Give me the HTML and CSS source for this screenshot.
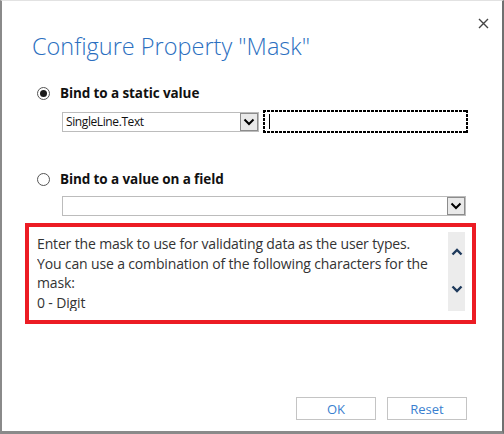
FILE: index.html
```html
<!DOCTYPE html>
<html>
<head>
<meta charset="utf-8">
<link rel="stylesheet" href="styles.css">
</head>
<body>
<div class="dialog">
  <div class="close-row">
    <svg class="close" width="11" height="11" viewBox="0 0 11 11"><path d="M1 1 L10 10 M10 1 L1 10" stroke="#444" stroke-width="1.4" fill="none"/></svg>
  </div>
  <h1 class="title">Configure Property "Mask"</h1>

  <div class="option first">
    <span class="radio checked"></span>
    <span class="opt-label">Bind to a static value</span>
  </div>
  <div class="controls">
    <div class="select short">
      <span class="select-text">SingleLine.Text</span>
      <span class="select-btn"><svg width="12" height="8" viewBox="0 0 12 8"><path d="M1.5 1.5 L6 6 L10.5 1.5" stroke="#000" stroke-width="2" fill="none"/></svg></span>
    </div>
    <div class="textbox"><span class="caret"></span></div>
  </div>

  <div class="option second">
    <span class="radio"></span>
    <span class="opt-label">Bind to a value on a field</span>
  </div>
  <div class="controls">
    <div class="select long">
      <span class="select-text"></span>
      <span class="select-btn"><svg width="12" height="8" viewBox="0 0 12 8"><path d="M1.5 1.5 L6 6 L10.5 1.5" stroke="#000" stroke-width="2" fill="none"/></svg></span>
    </div>
  </div>

  <div class="desc">
    <div class="desc-text">Enter the mask to use for validating data as the user types.<br>You can use a combination of the following characters for the<br>mask:<br>0 - Digit</div>
    <div class="scroller">
      <svg width="12" height="8" viewBox="0 0 12 8"><path d="M1.5 6.5 L6 2 L10.5 6.5" stroke="#1e3a5c" stroke-width="2.4" fill="none"/></svg>
      <svg width="12" height="8" viewBox="0 0 12 8"><path d="M1.5 1.5 L6 6 L10.5 1.5" stroke="#1e3a5c" stroke-width="2.4" fill="none"/></svg>
    </div>
  </div>

  <div class="footer">
    <button class="btn">OK</button>
    <button class="btn">Reset</button>
  </div>
</div>
</body>
</html>
```
FILE: styles.css
```css
html, body {
  margin: 0;
  padding: 0;
  background: #fff;
}
.dialog {
  box-sizing: border-box;
  width: 504px;
  height: 434px;
  border-top: 1px solid #e2e2e2;
  border-left: 2px solid #8a8a8a;
  border-right: 2px solid #707070;
  border-bottom: 3px solid #8a8a8a;
  display: flex;
  flex-direction: column;
  font-family: "Open Sans", "Noto Sans", sans-serif;
  color: #333;
}
.close-row {
  display: flex;
  justify-content: flex-end;
  padding: 17px 13px 0 0;
  height: 11px;
}
.close { display: block; }
.title {
  margin: 1px 0 0 30px;
  font-size: 23.5px;
  font-weight: 300;
  line-height: 32px;
  color: #2b6fc0;
  letter-spacing: 0;
}
.option {
  display: flex;
  align-items: center;
  height: 20px;
  margin-left: 35px;
}
.option.first { margin-top: 21px; }
.option.second { margin-top: 36px; }
.radio {
  box-sizing: border-box;
  width: 13px;
  height: 13px;
  border: 1px solid #555;
  border-radius: 50%;
  display: flex;
  align-items: center;
  justify-content: center;
}
.radio.checked::after {
  content: "";
  width: 7px;
  height: 7px;
  border-radius: 50%;
  background: #1a1a1a;
}
.opt-label {
  margin-left: 10px;
  font-size: 13.5px;
  font-weight: 700;
  color: #111;
  letter-spacing: -0.1px;
}
.controls {
  display: flex;
  align-items: center;
  margin-left: 60px;
  margin-top: 7px;
  gap: 4px;
}
.select {
  box-sizing: border-box;
  height: 20px;
  border: 1px solid #bcbcbc;
  display: flex;
  align-items: center;
  justify-content: space-between;
}
.select.short { width: 197px; }
.select.long { width: 404px; }
.select-text {
  font-size: 12px;
  color: #111;
  padding-left: 3px;
  letter-spacing: -0.4px;
}
.select-btn {
  box-sizing: border-box;
  width: 18px;
  height: 18px;
  border: 1px solid #8c8c8c;
  background: #e9e9e9;
  display: flex;
  align-items: center;
  justify-content: center;
}
.textbox {
  box-sizing: border-box;
  width: 205px;
  height: 23px;
  padding: 2px 2px 2px 6px;
  display: flex;
  align-items: center;
  background:
    repeating-linear-gradient(90deg, #000 0 3px, transparent 3px 4px) top left / 100% 2px no-repeat,
    repeating-linear-gradient(90deg, #000 0 3px, transparent 3px 4px) bottom left / 100% 2px no-repeat,
    repeating-linear-gradient(180deg, #000 0 3px, transparent 3px 4px) top left / 2px 100% no-repeat,
    repeating-linear-gradient(180deg, #000 0 3px, transparent 3px 4px) top right / 2px 100% no-repeat,
    #fff;
}
.caret {
  width: 1px;
  height: 15px;
  background: #000;
}
.desc {
  box-sizing: border-box;
  margin: 7px 0 0 23px;
  width: 451px;
  height: 101px;
  border: 4px solid #ec1c24;
  display: flex;
  padding: 5px 7px 9px 8px;
}
.desc-text {
  flex: 1;
  font-size: 14px;
  line-height: 19.5px;
  color: #333;
  padding-top: 2px;
  white-space: nowrap;
  overflow: hidden;
  letter-spacing: -0.15px;
}
.scroller {
  width: 17px;
  background: #ececec;
  display: flex;
  flex-direction: column;
  align-items: center;
  justify-content: space-between;
  padding: 16px 0 18px;
}
.scroller svg { display: block; }
.footer {
  margin-top: auto;
  display: flex;
  justify-content: flex-end;
  gap: 11px;
  padding: 0 35px 11px 0;
}
.btn {
  box-sizing: border-box;
  width: 80px;
  height: 23px;
  border: 1px solid #c4c4c4;
  background: #fff;
  font-family: "Open Sans", "Noto Sans", sans-serif;
  font-size: 13px;
  color: #3a7fd0;
  padding: 0;
}
```
